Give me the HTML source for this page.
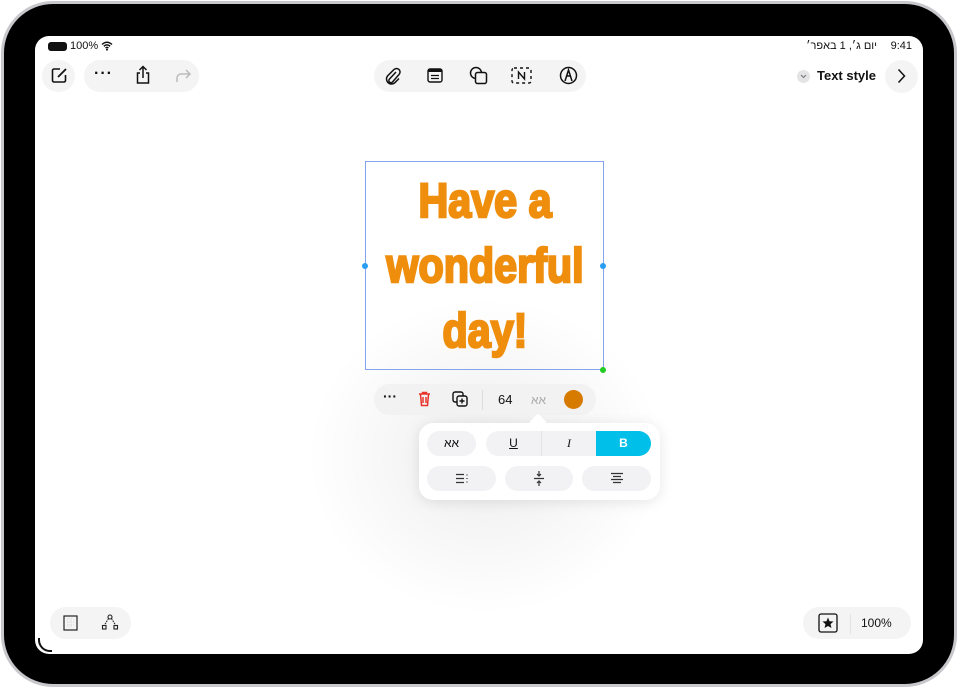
<!DOCTYPE html>
<html><head><meta charset="utf-8"><style>
*{margin:0;padding:0;box-sizing:border-box}
body{width:960px;height:689px;background:#fff;position:relative;overflow:hidden;font-family:"Liberation Sans","Noto Sans CJK SC",sans-serif;color:#111}
.frame{position:absolute;left:1px;top:1px;width:956px;height:686px;border-radius:52px;background:#000;border:3px solid #c8c8cc}
.screen{position:absolute;left:35px;top:36px;width:888px;height:618px;border-radius:14px;background:#fff;overflow:hidden}
.pill{position:absolute;background:#f4f4f5;border-radius:17px;height:32px}
.ab{position:absolute}
svg{position:absolute}
</style></head><body>
<div class="frame"></div>
<div class="screen">
<div style="position:absolute;left:270px;top:260px;width:360px;height:320px;border-radius:50%;background:radial-gradient(ellipse,rgba(0,0,0,0.07),rgba(0,0,0,0) 70%)"></div>
<!-- status -->
<div class="ab" style="left:13px;top:6px;width:19px;height:9px;border-radius:3px;background:#111"></div>
<div class="ab" style="left:35px;top:4px;font-size:11px">100%</div>
<svg style="left:66px;top:5px" width="12" height="10" viewBox="0 0 12 10"><path d="M1 3.5Q6 -1 11 3.5M2.8 5.3Q6 2.5 9.2 5.3M4.5 7Q6 5.8 7.5 7" stroke="#111" stroke-width="1.4" fill="none"/><circle cx="6" cy="8.6" r="1" fill="#111"/></svg>
<div class="ab" style="right:11px;top:4px;font-size:11px">9:41</div>
<div class="ab" style="right:46px;top:4px;font-size:11px" dir="rtl">יום ג׳, 1 באפר׳</div>
<!-- top left -->
<div class="pill" style="left:7px;top:24px;width:33px;height:32px"></div>
<svg style="left:16px;top:31px" width="17" height="17" viewBox="0 0 17 17"><path d="M9 2H3a1.5 1.5 0 0 0-1.5 1.5v10A1.5 1.5 0 0 0 3 15h10a1.5 1.5 0 0 0 1.5-1.5V8" stroke="#111" stroke-width="1.6" fill="none"/><path d="M7 10L15 2" stroke="#111" stroke-width="1.8"/></svg>
<div class="pill" style="left:49px;top:24px;width:115px;height:32px"></div>
<div class="ab" style="left:59px;top:29px;font-size:16px;font-weight:bold;letter-spacing:1px">···</div>
<svg style="left:100px;top:29px" width="16" height="20" viewBox="0 0 16 20"><path d="M5 8H2.5v10h11V8H11M8 13V1.5M4.5 5L8 1.5 11.5 5" stroke="#111" stroke-width="1.5" fill="none"/></svg>
<svg style="left:139px;top:33px" width="18" height="14" viewBox="0 0 18 14"><path d="M3 13V9a4 4 0 0 1 4-4h9M12 1l4 4-4 4" stroke="#bbb" stroke-width="1.5" fill="none"/></svg>
<!-- top center -->
<div class="pill" style="left:339px;top:24px;width:212px;height:32px"></div>
<svg style="left:349px;top:30px" width="18" height="20" viewBox="0 0 18 20"><path d="M12 6L5.5 13a2 2 0 0 0 3 3L15 8.5a3.5 3.5 0 0 0-5-5L3.5 10a5 5 0 0 0 7 7L15 12.5" stroke="#111" stroke-width="1.5" fill="none"/></svg>
<svg style="left:392px;top:32px" width="16" height="15" viewBox="0 0 16 15"><rect x="1" y="1" width="14" height="13" rx="2" stroke="#111" stroke-width="1.4" fill="none"/><rect x="1" y="1" width="14" height="3" fill="#111"/><path d="M4 7.5h8M4 10.5h8" stroke="#111" stroke-width="1.3"/></svg>
<svg style="left:434px;top:30px" width="19" height="19" viewBox="0 0 19 19"><circle cx="7" cy="7" r="5.5" stroke="#111" stroke-width="1.5" fill="none"/><rect x="6.5" y="6.5" width="11" height="11" rx="2" stroke="#111" stroke-width="1.5" fill="#f4f4f5"/></svg>
<svg style="left:476px;top:31px" width="21" height="17" viewBox="0 0 21 17"><path d="M3 1h15a2 2 0 0 1 2 2v11a2 2 0 0 1-2 2H3a2 2 0 0 1-2-2V3a2 2 0 0 1 2-2" stroke="#111" stroke-width="1.4" fill="none" stroke-dasharray="3 3"/><path d="M7.5 12V5l6 7V5" stroke="#111" stroke-width="1.4" fill="none"/></svg>
<svg style="left:524px;top:30px" width="19" height="19" viewBox="0 0 19 19"><circle cx="9.5" cy="9.5" r="8" stroke="#111" stroke-width="1.5" fill="none"/><path d="M6 15L9.5 4 13 15M8 10h3" stroke="#111" stroke-width="1.5" fill="none"/></svg>
<!-- top right -->
<div class="ab" style="left:762px;top:34px;width:13px;height:13px;border-radius:50%;background:#e4e4e6"></div>
<svg style="left:765px;top:38px" width="7" height="5" viewBox="0 0 7 5"><path d="M1 1l2.5 2.5L6 1" stroke="#777" stroke-width="1.1" fill="none"/></svg>
<div class="ab" style="left:782px;top:32px;font-size:13px;font-weight:bold">Text style</div>
<div class="ab" style="left:850px;top:24px;width:33px;height:33px;border-radius:50%;background:#f4f4f5"></div>
<svg style="left:862px;top:32px" width="9" height="16" viewBox="0 0 9 16"><path d="M1.5 1.5l6 6.5-6 6.5" stroke="#111" stroke-width="1.5" fill="none"/></svg>
<!-- text box -->
<div class="ab" style="left:330px;top:125px;width:239px;height:209px;border:1px solid #86a3f0"></div>
<div class="ab" style="left:327px;top:227px;width:6px;height:6px;border-radius:50%;background:#2a9df4"></div>
<div class="ab" style="left:565px;top:227px;width:6px;height:6px;border-radius:50%;background:#2a9df4"></div>
<div class="ab" style="left:565px;top:331px;width:6px;height:6px;border-radius:50%;background:#22cc22"></div>
<div class="ab" style="left:270px;top:133px;width:360px;text-align:center;color:#ef8e0c;font-weight:bold;font-size:48px;line-height:65px;transform:scaleX(0.86);transform-origin:center;-webkit-text-stroke:2.5px #ef8e0c">Have a<br>wonderful<br>day!</div>
<!-- mini toolbar -->
<div class="ab" style="left:339px;top:348px;width:222px;height:31px;border-radius:16px;background:#f2f2f3"></div>
<div class="ab" style="left:348px;top:352px;font-size:14px;font-weight:bold">···</div>
<svg style="left:383px;top:355px" width="13" height="16" viewBox="0 0 13 16"><path d="M1 3h11M4.5 3V1.5h4V3M2.5 3.5l1 11h6l1-11M5 6v6M8 6v6" stroke="#e8322a" stroke-width="1.5" fill="none"/></svg>
<svg style="left:417px;top:355px" width="16" height="16" viewBox="0 0 16 16"><rect x="1" y="1" width="10" height="10" rx="2" stroke="#111" stroke-width="1.4" fill="none"/><rect x="5" y="5" width="10" height="10" rx="2" stroke="#111" stroke-width="1.4" fill="#f2f2f3"/><path d="M10 7.5v5M7.5 10h5" stroke="#111" stroke-width="1.4"/></svg>
<div class="ab" style="left:447px;top:354px;width:1px;height:20px;background:#ddd"></div>
<div class="ab" style="left:463px;top:356px;font-size:13px">64</div>
<div class="ab" style="left:496px;top:357px;font-size:12px;color:#aaa">אא</div>
<div class="ab" style="left:529px;top:354px;width:19px;height:19px;border-radius:50%;background:#d77a00"></div>
<!-- popup -->
<div class="ab" style="left:384px;top:387px;width:241px;height:77px;border-radius:14px;background:#fff;box-shadow:0 2px 14px rgba(0,0,0,0.1)"></div>
<div class="ab" style="left:497px;top:380px;width:12px;height:12px;background:#fff;transform:rotate(45deg)"></div>
<div class="ab" style="left:392px;top:395px;width:49px;height:25px;border-radius:13px;background:#f2f2f4;text-align:center;font-size:12px;line-height:25px">אא</div>
<div class="ab" style="left:451px;top:395px;width:165px;height:25px;border-radius:13px;background:#f2f2f4;overflow:hidden">
<div class="ab" style="left:0;width:55px;height:25px;text-align:center;font-size:12px;line-height:25px;text-decoration:underline">U</div>
<div class="ab" style="left:55px;width:1px;top:0;height:25px;background:#e2e2e4"></div>
<div class="ab" style="left:56px;width:54px;height:25px;text-align:center;font-size:12px;line-height:25px;font-style:italic;font-family:'Liberation Serif',serif">I</div>
<div class="ab" style="left:110px;width:55px;height:25px;background:#00bfe8;color:#fff;text-align:center;font-size:12px;font-weight:bold;line-height:25px">B</div>
</div>
<div class="ab" style="left:392px;top:430px;width:69px;height:25px;border-radius:13px;background:#f2f2f4"></div>
<svg style="left:420px;top:437px" width="14" height="11" viewBox="0 0 14 11"><path d="M1 1.5h8M1 5.5h8M1 9.5h8M12 1.5v1M12 5v1M12 8.5v1" stroke="#333" stroke-width="1.2"/></svg>
<div class="ab" style="left:470px;top:430px;width:68px;height:25px;border-radius:13px;background:#f2f2f4"></div>
<svg style="left:498px;top:434px" width="12" height="17" viewBox="0 0 12 17"><path d="M1 8.5h10M6 1v5M4 4l2 2 2-2M6 16v-5M4 13l2-2 2 2" stroke="#333" stroke-width="1.2" fill="none"/></svg>
<div class="ab" style="left:547px;top:430px;width:69px;height:25px;border-radius:13px;background:#f2f2f4"></div>
<svg style="left:575px;top:436px" width="14" height="13" viewBox="0 0 14 13"><path d="M1 1.5h12M3 4.5h8M1 7.5h12M3 10.5h8" stroke="#333" stroke-width="1.2"/></svg>
<!-- bottom -->
<div class="pill" style="left:15px;top:571px;width:81px;height:32px"></div>
<svg style="left:28px;top:579px" width="15" height="16" viewBox="0 0 15 16"><rect x="1" y="1" width="13" height="14" stroke="#222" stroke-width="1.2" fill="none"/><path d="M4 4h7M4 7h7M4 10h7M5 3v10M8 3v10" stroke="#ccc" stroke-width="0.6" stroke-dasharray="1 1"/></svg>
<svg style="left:66px;top:578px" width="18" height="17" viewBox="0 0 18 17"><circle cx="9" cy="3" r="2" stroke="#222" stroke-width="1.1" fill="none"/><rect x="1.5" y="11.5" width="3.5" height="3.5" stroke="#222" stroke-width="1.1" fill="none"/><rect x="13" y="11.5" width="3.5" height="3.5" stroke="#222" stroke-width="1.1" fill="none"/><path d="M7.5 4.5L3.5 11M10.5 4.5L14.5 11" stroke="#222" stroke-width="1.1" stroke-dasharray="1.5 1"/></svg>
<div class="pill" style="left:768px;top:571px;width:108px;height:32px"></div>
<svg style="left:783px;top:577px" width="20" height="20" viewBox="0 0 20 20"><rect x="1" y="1" width="18" height="18" rx="2" stroke="#111" stroke-width="1.3" fill="none"/><path d="M10 4.5l1.5 3.7 4 .3-3 2.6 1 3.9L10 13l-3.5 2 1-3.9-3-2.6 4-.3z" fill="#111"/></svg>
<div class="ab" style="left:815px;top:578px;width:1px;height:20px;background:#e2e2e4"></div>
<div class="ab" style="left:826px;top:580px;font-size:12px">100%</div>
<div class="ab" style="left:3px;top:602px;width:14px;height:14px;border-left:2px solid #111;border-bottom:2px solid #111;border-bottom-left-radius:12px"></div>
</div>
</body></html>
